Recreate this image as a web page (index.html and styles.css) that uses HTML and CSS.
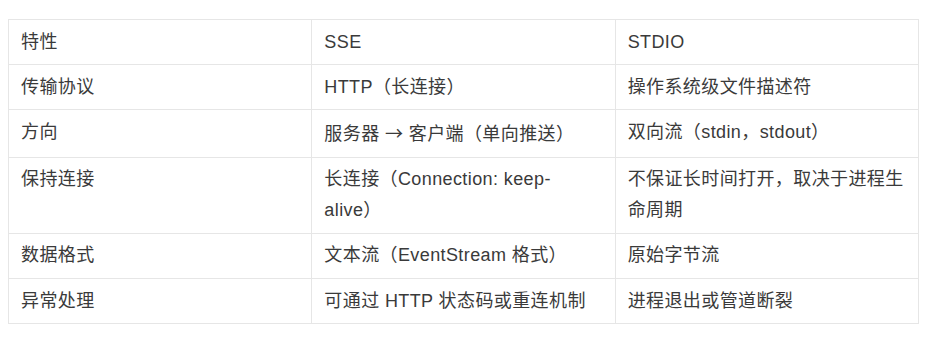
FILE: index.html
```html
<!DOCTYPE html>
<html lang="zh-CN">
<head>
<meta charset="utf-8">
<title>SSE vs STDIO</title>
<link rel="stylesheet" href="styles.css">
</head>
<body>
<div class="page">
  <table class="compare">
    <colgroup>
      <col class="c">
      <col class="c">
      <col class="c">
    </colgroup>
    <tbody>
      <tr><td>特性</td><td>SSE</td><td>STDIO</td></tr>
      <tr><td>传输协议</td><td>HTTP（长连接）</td><td>操作系统级文件描述符</td></tr>
      <tr><td>方向</td><td>服务器 <span class="arrow">→</span> 客户端（单向推送）</td><td>双向流（stdin，stdout）</td></tr>
      <tr><td>保持连接</td><td>长连接（Connection: keep-alive）</td><td>不保证长时间打开，取决于进程生命周期</td></tr>
      <tr><td>数据格式</td><td>文本流（EventStream 格式）</td><td>原始字节流</td></tr>
      <tr><td>异常处理</td><td>可通过 HTTP 状态码或重连机制</td><td>进程退出或管道断裂</td></tr>
    </tbody>
  </table>
</div>
</body>
</html>
```

FILE: styles.css
```css
html, body {
  margin: 0;
  padding: 0;
  background: #ffffff;
}

.page {
  padding: 19px 8px;
  font-family: "Liberation Sans", "Noto Sans CJK SC", sans-serif;
  font-size: 18px;
  letter-spacing: 0.4px;
  color: #3a3a3a;
  text-spacing-trim: space-all;
}

.compare {
  width: 911px;
  border-collapse: collapse;
  table-layout: fixed;
}

.compare td {
  border: 1px solid #e6e6e6;
  padding: 6.6px 12px;
  line-height: 31px;
  vertical-align: top;
  text-align: left;
}

.arrow {
  font-family: "Noto Sans CJK SC", sans-serif;
}
```
